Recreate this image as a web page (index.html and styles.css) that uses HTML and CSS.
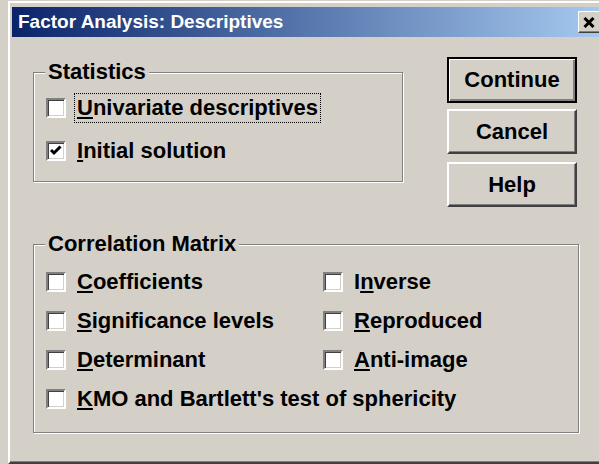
FILE: index.html
```html
<!DOCTYPE html>
<html lang="en">
<head>
    <meta charset="UTF-8">
    <meta name="viewport" content="width=device-width, initial-scale=1.0">
    <title>Factor Analysis: Descriptives</title>
    <link rel="stylesheet" href="styles.css">
</head>
<body>

    <div class="window">
        <div class="titlebar">
            <span class="title">Factor Analysis: Descriptives</span>
            <span class="close">
                <svg width="12" height="11" viewBox="0 0 12 11">
                    <path d="M1.5 1 L10.5 10 M10.5 1 L1.5 10" stroke="#000" stroke-width="3" fill="none"/>
                </svg>
            </span>
        </div>

        <div class="content">
            <div class="top-row">
                <div class="group stats">
                    <span class="group-title">Statistics</span>
                    <div class="stats-list">
                        <label class="option">
                            <span class="check"></span>
                            <span class="text focused"><u>U</u>nivariate descriptives</span>
                        </label>
                        <label class="option">
                            <span class="check">
                                <svg width="16" height="16" viewBox="0 0 16 16">
                                    <path d="M3 7 L6 10 L12.5 3.5" stroke="#000" stroke-width="3" fill="none"/>
                                </svg>
                            </span>
                            <span class="text"><u>I</u>nitial solution</span>
                        </label>
                    </div>
                </div>

                <div class="buttons">
                    <button class="btn default">Continue</button>
                    <button class="btn">Cancel</button>
                    <button class="btn">Help</button>
                </div>
            </div>

            <div class="group matrix">
                <span class="group-title">Correlation Matrix</span>
                <div class="matrix-grid">
                    <label class="option">
                        <span class="check"></span>
                        <span class="text"><u>C</u>oefficients</span>
                    </label>
                    <label class="option">
                        <span class="check"></span>
                        <span class="text">I<u>n</u>verse</span>
                    </label>
                    <label class="option">
                        <span class="check"></span>
                        <span class="text"><u>S</u>ignificance levels</span>
                    </label>
                    <label class="option">
                        <span class="check"></span>
                        <span class="text"><u>R</u>eproduced</span>
                    </label>
                    <label class="option">
                        <span class="check"></span>
                        <span class="text"><u>D</u>eterminant</span>
                    </label>
                    <label class="option">
                        <span class="check"></span>
                        <span class="text"><u>A</u>nti-image</span>
                    </label>
                    <label class="option wide">
                        <span class="check"></span>
                        <span class="text"><u>K</u>MO and Bartlett's test of sphericity</span>
                    </label>
                </div>
            </div>
        </div>
    </div>

</body>
</html>
```

FILE: styles.css
```css
html, body {
    margin: 0;
    padding: 0;
    overflow: hidden;
    background-color: #d4d0c8;
}
body {
    font-family: "Liberation Sans", Arial, sans-serif;
    font-weight: bold;
    font-size: 22px;
    color: #000;
    height: 464px;
}
.window {
    box-sizing: border-box;
    width: 600px;
    height: 463px;
    margin: 1px 0 0 8px;
    padding: 4px 2px 0 2px;
    border-top: 2px solid #fff;
    border-left: 2px solid #fff;
    border-bottom: 2px solid #404040;
    box-shadow: inset 0 -1px #808080;
}
.titlebar {
    display: flex;
    align-items: center;
    justify-content: space-between;
    width: 592px;
    height: 30px;
    padding: 0 2px 0 6px;
    box-sizing: border-box;
    background: linear-gradient(to right, #0a246a, #a6caf0);
}
.title {
    color: #fff;
    font-size: 19px;
    line-height: 30px;
}
.close {
    display: flex;
    align-items: center;
    justify-content: center;
    box-sizing: border-box;
    width: 24px;
    height: 22px;
    padding-right: 2px;
    background-color: #d4d0c8;
    border: 1px solid;
    border-color: #fff #404040 #404040 #fff;
    box-shadow: inset -1px -1px #808080;
}
.close svg {
    display: block;
    flex: none;
}
.content {
    padding: 35px 0 0 21px;
}
.top-row {
    display: flex;
    align-items: flex-start;
}
.group {
    position: relative;
    box-sizing: border-box;
    border: 1px solid #808080;
    box-shadow: inset 1px 1px #fff, 1px 1px #fff;
}
.group-title {
    position: absolute;
    top: -12px;
    left: 11px;
    padding: 0 3px;
    line-height: 22px;
    background-color: #d4d0c8;
}
.stats {
    width: 370px;
    height: 110px;
    padding: 20px 0 0 12px;
}
.stats-list {
    display: flex;
    flex-direction: column;
    gap: 13px;
}
.option {
    display: flex;
    align-items: center;
    height: 30px;
}
.check {
    box-sizing: border-box;
    width: 20px;
    height: 20px;
    flex: none;
    background-color: #fff;
    border: 2px solid;
    border-color: #808080 #fff #fff #808080;
    box-shadow: inset 1px 1px #404040, inset -1px -1px #d4d0c8;
}
.check svg {
    display: block;
}
.text {
    margin-left: 8px;
    padding: 0 2px;
    line-height: 28px;
    border: 1px solid transparent;
    white-space: nowrap;
}
.text.focused {
    border: 1px dotted #000;
}
.buttons {
    display: flex;
    flex-direction: column;
    width: 130px;
    margin: -15px 0 0 44px;
}
.btn {
    box-sizing: border-box;
    height: 45px;
    margin-top: 8px;
    padding: 0;
    font-family: inherit;
    font-weight: bold;
    font-size: 22px;
    color: #000;
    background-color: #d4d0c8;
    border: 2px solid;
    border-color: #fff #404040 #404040 #fff;
    box-shadow: inset -1px -1px #808080;
}
.btn:nth-child(2) {
    margin-top: 6px;
}
.btn.default {
    height: 46px;
    margin-top: 0;
    border: 2px solid #000;
    box-shadow: inset 1px 1px #fff, inset -2px -2px #808080;
}
.matrix {
    width: 546px;
    height: 189px;
    margin-top: 37px;
    padding: 22px 0 0 12px;
}
.matrix-grid {
    display: grid;
    grid-template-columns: 277px auto;
    row-gap: 9px;
}
.option.wide {
    grid-column: 1 / 3;
}
```
